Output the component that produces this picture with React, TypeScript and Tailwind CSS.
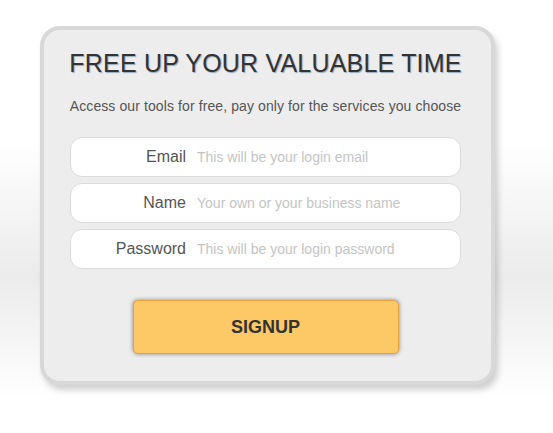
import React from 'react';

const fields = [
  { label: 'Email', placeholder: 'This will be your login email', type: 'email' },
  { label: 'Name', placeholder: 'Your own or your business name', type: 'text' },
  { label: 'Password', placeholder: 'This will be your login password', type: 'password' },
];

const App: React.FC = () => {
  return (
    <main
      className="min-h-[433px] w-full bg-[linear-gradient(to_bottom,#ffffff_0%,#ffffff_33%,#ebebeb_64%,#ffffff_92%)] pt-[26px] pl-[40px]"
      style={{ fontFamily: '"Liberation Sans", Arial, sans-serif' }}
    >
      <div className="w-[455px] rounded-[20px] border-[4px] border-[#d8d8d8] bg-[#ededed] shadow-[3px_5px_6px_rgba(0,0,0,0.18)] pl-[26px] pr-[30px] pt-[18px] pb-[27px]">
        <h1 className="-mx-4 whitespace-nowrap text-center text-[25px] leading-[30px] tracking-[0.2px] text-[#333] [text-shadow:1px_1px_1px_#9ab]">
          FREE UP YOUR VALUABLE TIME
        </h1>
        <p className="-mx-4 mt-[19px] whitespace-nowrap text-center text-[14px] leading-[18px] tracking-[0.1px] text-[#555]">
          Access our tools for free, pay only for the services you choose
        </p>

        <div className="mt-[22px] flex flex-col gap-[6px]">
          {fields.map((f) => (
            <label
              key={f.label}
              className="flex h-[40px] items-center rounded-[12px] border border-[#dcdcdc] bg-white"
            >
              <span className="w-[115px] shrink-0 text-right text-[16px] text-[#555]">{f.label}</span>
              <input
                type={f.type}
                placeholder={f.placeholder}
                className="ml-[11px] flex-1 bg-transparent text-[14px] text-[#555] outline-none placeholder:text-[#c4c4c4]"
              />
            </label>
          ))}
        </div>

        <div className="mt-[31px] flex justify-center">
          <button className="h-[54px] w-[266px] rounded-[5px] border border-[#e8a23a] bg-[#fdc866] text-[18px] font-bold text-[#333] shadow-[0_0_4px_rgba(0,0,0,0.45)]">
            SIGNUP
          </button>
        </div>
      </div>
    </main>
  );
};

export default App;
